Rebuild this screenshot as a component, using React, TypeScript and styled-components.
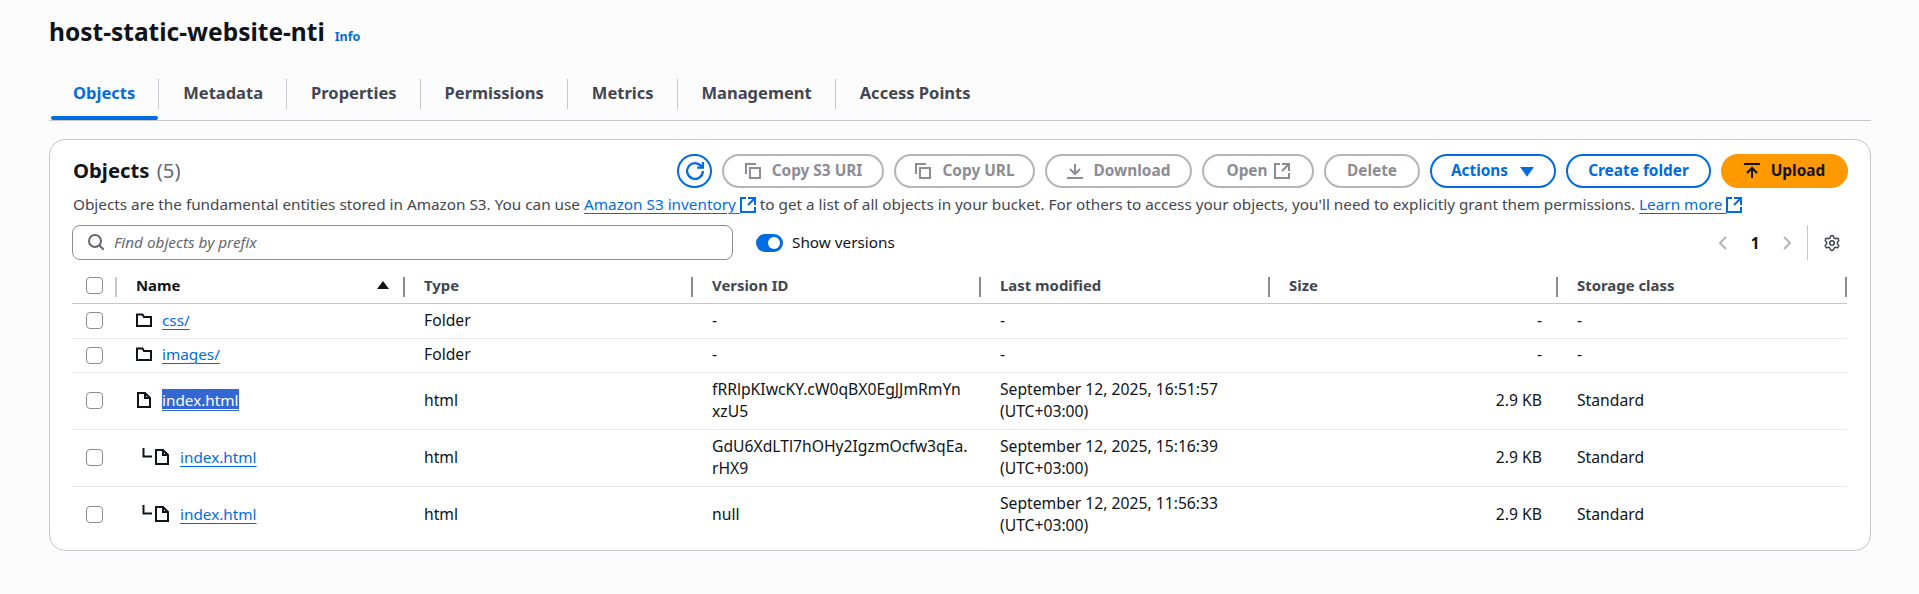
import React from 'react'
import styled, { createGlobalStyle } from 'styled-components'
import { Settings } from 'lucide-react'

const GlobalStyle = createGlobalStyle`
  html, body {
    margin: 0;
    padding: 0;
    background: #fcfcfd;
    color: #0f141a;
    font-family: "Noto Sans", "Open Sans", sans-serif;
    font-size: 15.3px;
    line-height: 22px;
  }
`

const Page = styled.div`
  width: 1919px;
  height: 594px;
  padding: 17px 48px 0 49px;
  box-sizing: border-box;
  overflow: hidden;
`

const TitleRow = styled.div`
  display: flex;
  align-items: baseline;
  gap: 10px;
`

const Title = styled.h1`
  margin: 0;
  font-size: 24.5px;
  line-height: 30px;
  font-weight: 700;
`

const InfoLink = styled.a`
  color: #006ce0;
  font-size: 12.5px;
  font-weight: 700;
`

const Tabs = styled.div`
  display: flex;
  margin-top: 31px;
  height: 41px;
  border-bottom: 1px solid #c6c6cd;
`

const Tab = styled.div<{ $active?: boolean }>`
  position: relative;
  height: 30px;
  line-height: 28px;
  padding: 0 23px 0 ${({ $active }) => ($active ? '22px' : '24px')};
  margin-left: ${({ $active }) => ($active ? '2px' : '0')};
  border-right: 1px solid #c6c6cd;
  font-weight: 700;
  font-size: 16.5px;
  color: ${({ $active }) => ($active ? '#006ce0' : '#424650')};

  &:last-child {
    border-right: none;
  }

  ${({ $active }) =>
    $active
      ? `&::after {
          content: '';
          position: absolute;
          left: 0;
          right: 0;
          top: 37px;
          height: 4px;
          border-radius: 2px;
          background: #006ce0;
        }`
      : ''}
`

const Card = styled.section`
  margin-top: 18px;
  height: 412px;
  box-sizing: border-box;
  padding: 14px 22px 0 23px;
  background: #fff;
  border: 1px solid #c6c6cd;
  border-radius: 16px;
`

const CardHeader = styled.div`
  display: flex;
  align-items: center;
  justify-content: space-between;
  height: 34px;
`

const CardTitle = styled.h2`
  margin: 0 0 2px;
  font-size: 20.3px;
  line-height: 24px;
  font-weight: 700;

  span {
    margin-left: 2px;
    font-weight: 400;
    color: #656871;
  }
`

const Actions = styled.div`
  display: flex;
  gap: 10px;
`

const Button = styled.button<{ $variant?: 'disabled' | 'normal' | 'primary'; $width?: number }>`
  display: inline-flex;
  align-items: center;
  justify-content: center;
  gap: 11px;
  width: ${({ $width }) => ($width ? `${$width}px` : 'auto')};
  height: 34px;
  padding: 0 0 1px;
  box-sizing: border-box;
  border-radius: 20px;
  font-family: inherit;
  font-size: 15.4px;
  font-weight: 700;
  background: ${({ $variant }) => ($variant === 'primary' ? '#ff9900' : '#fff')};
  color: ${({ $variant }) =>
    $variant === 'primary' ? '#0f141a' : $variant === 'disabled' ? '#8c8c94' : '#006ce0'};
  border: 2px solid
    ${({ $variant }) =>
      $variant === 'primary' ? '#ff9900' : $variant === 'disabled' ? '#b4b4bb' : '#006ce0'};
`

const TrailingButton = styled(Button)`
  gap: 6px;
`

const Description = styled.p`
  margin: 5px 0 0;
  line-height: 22px;
  color: #424650;
  white-space: nowrap;
`

const TextLink = styled.a<{ $selected?: boolean }>`
  color: ${({ $selected }) => ($selected ? '#fff' : '#006ce0')};
  background: ${({ $selected }) => ($selected ? '#3367d1' : 'transparent')};
  text-decoration: underline;
  text-decoration-color: ${({ $selected }) => ($selected ? '#fff' : '#006ce0')};
  text-underline-offset: 3px;
`

const ExternalWrap = styled.span`
  display: inline-block;
  vertical-align: -3px;
  color: #006ce0;
`

const FilterRow = styled.div`
  display: flex;
  align-items: center;
  margin-top: 10px;
  margin-left: -1px;
  height: 35px;
`

const SearchBox = styled.div`
  display: flex;
  align-items: center;
  gap: 10px;
  width: 661px;
  height: 35px;
  padding: 0 0 1px 15px;
  box-sizing: border-box;
  border: 1px solid #8c8c94;
  border-radius: 8px;
  color: #656871;
  font-style: italic;
`

const Toggle = styled.div`
  position: relative;
  width: 27px;
  height: 18px;
  margin-left: 23px;
  border-radius: 9px;
  background: #006ce0;

  &::after {
    content: '';
    position: absolute;
    top: 3px;
    right: 3px;
    width: 12px;
    height: 12px;
    border-radius: 50%;
    background: #fff;
  }
`

const ToggleLabel = styled.span`
  margin-left: 9px;
  padding-bottom: 1px;
`

const Pagination = styled.div`
  display: flex;
  align-items: center;
  margin-left: auto;
  margin-right: 7px;
  height: 35px;
  color: #b4b4bb;
`

const PageNumber = styled.span`
  width: 48px;
  text-align: center;
  font-weight: 700;
  color: #0f141a;
`

const PrefsDivider = styled.span`
  width: 1px;
  height: 35px;
  margin: 0 15px 0 12px;
  background: #c6c6cd;
`

const PrefsIcon = styled(Settings)`
  color: #424650;
`

const Table = styled.table`
  margin-top: 9px;
  margin-left: -1px;
  width: 1775px;
  table-layout: fixed;
  border-collapse: collapse;
`

const HeadCell = styled.th<{ $muted?: boolean }>`
  position: relative;
  height: 34px;
  padding: 0 0 2px 19px;
  box-sizing: border-box;
  text-align: left;
  font-weight: 700;
  font-size: 14.9px;
  border-bottom: 1px solid #c6c6cd;
  color: #424650;

  &::after {
    content: '';
    position: absolute;
    right: 0;
    top: 8px;
    width: 2px;
    height: 20px;
    background: ${({ $muted }) => ($muted ? '#c6c6cd' : '#8c8c94')};
  }
`

const NameHead = styled.div`
  display: flex;
  align-items: center;
  justify-content: space-between;
  padding-right: 16px;
  color: #0f141a;
`

const Cell = styled.td`
  padding: 0 15px 2px 19px;
  border-bottom: 1px solid #e8e8ec;
  vertical-align: middle;
  font-size: 15.7px;
  line-height: 22px;
`

const VersionCell = styled(Cell)`
  padding-right: 0;
  white-space: pre-line;
`

const SizeCell = styled(Cell)`
  padding: 0 16px 2px 0;
  text-align: right;
`

const Row = styled.tr<{ $tall?: boolean }>`
  height: ${({ $tall }) => ($tall ? '57px' : '34px')};

  &:first-child {
    height: 35px;
  }

  &:last-child td {
    border-bottom: none;
  }
`

const CheckCell = styled(Cell)`
  padding: 0 0 0 14px;
`

const HeadCheckCell = styled(HeadCell)`
  padding: 0 0 0 14px;
`

const Checkbox = styled.span`
  display: block;
  width: 17px;
  height: 17px;
  box-sizing: border-box;
  border: 1px solid #8c8c94;
  border-radius: 4px;
  background: #fff;
`

const NameWrap = styled.div<{ $child?: boolean }>`
  display: flex;
  align-items: center;
  font-size: 15.3px;
  padding-left: ${({ $child }) => ($child ? '6px' : '0')};
`

const IconSlot = styled.span<{ $child?: boolean }>`
  display: inline-flex;
  width: 26px;
  margin-left: ${({ $child }) => ($child ? '2px' : '0')};
  color: #0f141a;
`

const Icon = styled.svg`
  display: block;
  fill: none;
  stroke: currentColor;
  stroke-width: 2;
  flex-shrink: 0;
`

const ChildMark = styled(Icon)`
  margin-bottom: 7px;
  color: #0f141a;
`

const ExternalIcon = () => (
  <Icon width={16} height={16} viewBox="0 0 16 16">
    <path d="M15 8V1H8M15 1 8 8M6 1H1v14h14v-5" />
  </Icon>
)

const CopyIcon = () => (
  <Icon width={17} height={17} viewBox="0 0 17 17">
    <path d="M6 6h10v10H6z" />
    <path d="M2 12V2h10" />
  </Icon>
)

const FolderIcon = () => (
  <Icon width={16} height={16} viewBox="0 0 16 16">
    <path d="M1 2.500h5.500L8 5h7v9H1z" />
  </Icon>
)

const FileIcon = () => (
  <Icon width={16} height={16} viewBox="0 0 16 16">
    <path d="M9 1v5h5" />
    <path d="M14 15H2V1h7l5 5z" />
  </Icon>
)

const External = () => (
  <ExternalWrap>
    <ExternalIcon />
  </ExternalWrap>
)

type ObjectRow = {
  name: string
  kind: 'folder' | 'file'
  type: string
  version: string
  modified: string
  size: string
  storage: string
  child?: boolean
  selected?: boolean
}

const tabs = ['Objects', 'Metadata', 'Properties', 'Permissions', 'Metrics', 'Management', 'Access Points']

const rows: ObjectRow[] = [
  { name: 'css/', kind: 'folder', type: 'Folder', version: '-', modified: '-', size: '-', storage: '-' },
  { name: 'images/', kind: 'folder', type: 'Folder', version: '-', modified: '-', size: '-', storage: '-' },
  {
    name: 'index.html',
    kind: 'file',
    type: 'html',
    version: 'fRRlpKIwcKY.cW0qBX0EgJJmRmYn\nxzU5',
    modified: 'September 12, 2025, 16:51:57 (UTC+03:00)',
    size: '2.9 KB',
    storage: 'Standard',
    selected: true,
  },
  {
    name: 'index.html',
    kind: 'file',
    type: 'html',
    version: 'GdU6XdLTl7hOHy2IgzmOcfw3qEa.\nrHX9',
    modified: 'September 12, 2025, 15:16:39 (UTC+03:00)',
    size: '2.9 KB',
    storage: 'Standard',
    child: true,
  },
  {
    name: 'index.html',
    kind: 'file',
    type: 'html',
    version: 'null',
    modified: 'September 12, 2025, 11:56:33 (UTC+03:00)',
    size: '2.9 KB',
    storage: 'Standard',
    child: true,
  },
]

const columns = ['Type', 'Version ID', 'Last modified', 'Size', 'Storage class']

export default function App() {
  return (
    <Page>
      <GlobalStyle />
      <TitleRow>
        <Title>host-static-website-nti</Title>
        <InfoLink>Info</InfoLink>
      </TitleRow>

      <Tabs>
        {tabs.map((tab, i) => (
          <Tab key={tab} $active={i === 0}>
            {tab}
          </Tab>
        ))}
      </Tabs>

      <Card>
        <CardHeader>
          <CardTitle>
            Objects <span>(5)</span>
          </CardTitle>
          <Actions>
            <Button $width={35}>
              <Icon width={18} height={18} viewBox="0 0 16 16">
                <path d="M10 5h5V0" />
                <path d="M15 8a7 7 0 1 1-.7-3" />
              </Icon>
            </Button>
            <Button $variant="disabled" $width={162}>
              <CopyIcon />
              Copy S3 URI
            </Button>
            <Button $variant="disabled" $width={141}>
              <CopyIcon />
              Copy URL
            </Button>
            <Button $variant="disabled" $width={147}>
              <Icon width={16} height={16} viewBox="0 0 16 16">
                <path d="M0 15h16M8 1v10M3 6l5 5 5-5" />
              </Icon>
              Download
            </Button>
            <TrailingButton $variant="disabled" $width={112}>
              Open
              <ExternalIcon />
            </TrailingButton>
            <Button $variant="disabled" $width={96}>
              Delete
            </Button>
            <Button $width={126}>
              Actions
              <Icon width={16} height={16} viewBox="0 0 16 16">
                <path d="M3 5h10l-5 7z" fill="currentColor" />
              </Icon>
            </Button>
            <Button $width={145}>Create folder</Button>
            <Button $variant="primary" $width={127}>
              <Icon width={16} height={16} viewBox="0 0 16 16">
                <path d="M0 1h16M8 15V5M3 10l5-5 5 5" />
              </Icon>
              Upload
            </Button>
          </Actions>
        </CardHeader>

        <Description>
          Objects are the fundamental entities stored in Amazon S3. You can use{' '}
          <TextLink>Amazon S3 inventory </TextLink>
          <External /> to get a list of all objects in your bucket. For others to access your objects,
          you'll need to explicitly grant them permissions. <TextLink>Learn more </TextLink>
          <External />
        </Description>

        <FilterRow>
          <SearchBox>
            <Icon width={16} height={16} viewBox="0 0 16 16">
              <circle cx="7" cy="7" r="6" />
              <path d="m16 16-4.700-4.700" />
            </Icon>
            Find objects by prefix
          </SearchBox>
          <Toggle />
          <ToggleLabel>Show versions</ToggleLabel>
          <Pagination>
            <Icon width={16} height={16} viewBox="0 0 16 16">
              <path d="M11 2 5 8l6 6" />
            </Icon>
            <PageNumber>1</PageNumber>
            <Icon width={16} height={16} viewBox="0 0 16 16">
              <path d="m5 2 6 6-6 6" />
            </Icon>
            <PrefsDivider />
            <PrefsIcon size={18} strokeWidth={2} />
          </Pagination>
        </FilterRow>

        <Table>
          <colgroup>
            <col width={45} />
            <col width={288} />
            <col width={288} />
            <col width={288} />
            <col width={289} />
            <col width={288} />
            <col width={289} />
          </colgroup>
          <thead>
            <tr>
              <HeadCheckCell $muted>
                <Checkbox />
              </HeadCheckCell>
              <HeadCell>
                <NameHead>
                  Name
                  <Icon width={12} height={8} viewBox="0 0 12 8">
                    <path d="M6 0 12 8H0z" fill="currentColor" stroke="none" />
                  </Icon>
                </NameHead>
              </HeadCell>
              {columns.map((c) => (
                <HeadCell key={c}>{c}</HeadCell>
              ))}
            </tr>
          </thead>
          <tbody>
            {rows.map((r, i) => (
              <Row key={i} $tall={r.kind === 'file'}>
                <CheckCell>
                  <Checkbox />
                </CheckCell>
                <Cell>
                  <NameWrap $child={r.child}>
                    {r.child && (
                      <ChildMark width={10} height={10} viewBox="0 0 10 10">
                        <path d="M1.500 0v8.500H10" />
                      </ChildMark>
                    )}
                    <IconSlot $child={r.child}>{r.kind === 'folder' ? <FolderIcon /> : <FileIcon />}</IconSlot>
                    <TextLink $selected={r.selected}>{r.name}</TextLink>
                  </NameWrap>
                </Cell>
                <Cell>{r.type}</Cell>
                <VersionCell>{r.version}</VersionCell>
                <Cell>{r.modified}</Cell>
                <SizeCell>{r.size}</SizeCell>
                <Cell>{r.storage}</Cell>
              </Row>
            ))}
          </tbody>
        </Table>
      </Card>
    </Page>
  )
}
